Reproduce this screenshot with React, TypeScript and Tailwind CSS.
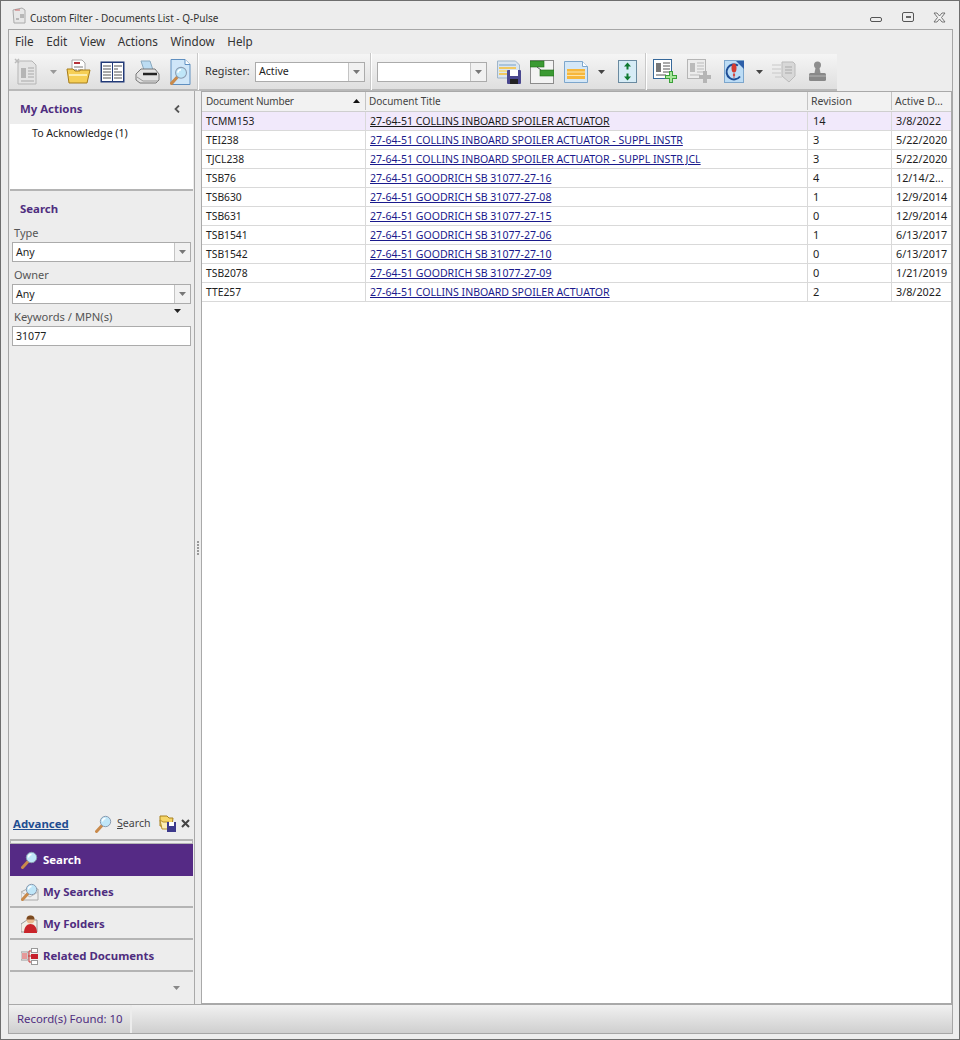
import React from "react";

const Caret = ({ c = "#444" }: { c?: string }) => (
  <svg width="7" height="4" viewBox="0 0 7 4" className="shrink-0"><path d="M0 0h7L3.5 4z" fill={c} /></svg>
);

const I = ({ children, w = 24, h = 24, className = "" }: { children: React.ReactNode; w?: number; h?: number; className?: string }) => (
  <svg width={w} height={h} viewBox={`0 0 ${w} ${h}`} className={`shrink-0 ${className}`}>{children}</svg>
);

const Magnifier = ({ x = 0, y = 0, s = 1 }: { x?: number; y?: number; s?: number }) => (
  <g transform={`translate(${x} ${y}) scale(${s})`}>
    <path d="M1.5 16.5 7 10.5" stroke="#c98a4b" strokeWidth="3" strokeLinecap="round" />
    <circle cx="10.5" cy="6.5" r="5.2" fill="#bfe6f8" stroke="#8a9bb0" strokeWidth="1" />
    <path d="M7.5 6.5a3 3 0 0 1 3-3" stroke="#fff" strokeWidth="1.4" fill="none" />
  </g>
);

const NewDocIcon = () => (
  <I w={26} h={27}>
    <path d="M4 3h14l4 4v19H4z" fill="#e4e4e4" stroke="#b5b5b5" />
    <path d="M1 1l4 4M5 1 1 5" stroke="#bbb" strokeWidth="1.5" />
    <rect x="7" y="10" width="5" height="10" fill="#b5b5b5" />
    <path d="M14 10h6M14 13h6M14 16h6M14 19h6M7 23h13" stroke="#a8a8a8" />
  </I>
);
const OpenIcon = () => (
  <I w={25} h={25}>
    <path d="M6 1h10l3 3v12H6z" fill="#fff" stroke="#aaa" />
    <path d="M8 4h6" stroke="#b5333a" strokeWidth="2" />
    <path d="M8 8h9M8 11h3M12 11h5" stroke="#777" />
    <path d="M1 10h6l2 2h5v-1h10l-3 13H3z" fill="#f6cf55" stroke="#a57c1c" />
    <path d="M3 16h18" stroke="#fdeeaf" strokeWidth="2" />
  </I>
);
const BookIcon = () => (
  <I w={25} h={22}>
    <rect x="0.5" y="0.5" width="24" height="21" fill="#223a78" />
    <rect x="2" y="2" width="10" height="18" fill="#fff" />
    <rect x="13" y="2" width="10" height="18" fill="#fff" />
    <path d="M3 5h8M3 8h8M3 11h8M3 14h8M3 17h8" stroke="#555" />
    <path d="M14 5h8M14 8h4M14 11h8M14 14h8M14 17h8" stroke="#555" />
  </I>
);
const PrinterIcon = () => (
  <I w={25} h={24}>
    <path d="M6 1h9l3 9H9z" fill="#bcdcf2" stroke="#8aa9bf" />
    <path d="M1 14l5-5h14l4 5v6l-3 3H5l-4-3z" fill="#e2e2e2" stroke="#777" />
    <path d="M8 14h14" stroke="#222" strokeWidth="2.5" />
    <path d="M2 17l6 4h15" stroke="#999" fill="none" />
  </I>
);
const PreviewIcon = () => (
  <I w={21} h={26}>
    <path d="M1 .5h14l5 5v20H1z" fill="#cfe6f8" stroke="#5f8fc0" />
    <path d="M15 .5v5h5" fill="#fff" stroke="#5f8fc0" />
    <Magnifier x={0} y={7} s={1.05} />
  </I>
);
const SaveGridIcon = () => (
  <I w={24} h={24}>
    <path d="M.5 1h18l4 4v13H.5z" fill="#dbe6f0" stroke="#9fb5c9" />
    <path d="M2 4h17v2H2z" fill="#a9c4dc" />
    <path d="M2 7h17v2H2z" fill="#f0c860" />
    <path d="M2 10h8v2H2z" fill="#f0dc90" />
    <path d="M2 13h8v2H2z" fill="#f0c860" />
    <rect x="10" y="10" width="14" height="14" rx="1" fill="#4a478f" />
    <rect x="13" y="10" width="8" height="6" fill="#fff" />
    <rect x="13" y="19" width="8" height="5" fill="#222" />
  </I>
);
const GanttIcon = () => (
  <I w={24} h={24}>
    <rect x=".5" y=".5" width="23" height="23" fill="#f3f3f3" stroke="#8c8c8c" />
    <rect x="0" y="1" width="14" height="6" fill="#3b9a33" stroke="#1f6b1a" strokeWidth=".6" />
    <rect x="10" y="10" width="14" height="6" fill="#3b9a33" stroke="#1f6b1a" strokeWidth=".6" />
    <path d="M7 7l4 3" stroke="#555" />
  </I>
);
const ListDocIcon = () => (
  <I w={24} h={22}>
    <path d="M.5.5h18l5 5v16H.5z" fill="#d4e7f7" stroke="#7da6cc" />
    <path d="M18.500.5v5h5" fill="#fff" stroke="#7da6cc" />
    <rect x="3" y="8" width="18" height="10" fill="#f6b73c" />
    <path d="M3 11h18M3 14.500h18" stroke="#fde5ac" />
  </I>
);
const ExpandIcon = () => (
  <I w={19} h={23}>
    <rect x=".5" y=".5" width="18" height="22" fill="#d7ecf6" stroke="#6a8aa0" />
    <path d="M9.500 2.500l-3.500 4h2.500v3h2v-3h2.500z M9.500 20.500l-3.500-4h2.500v-3h2v3h2.500z" fill="#0f7a30" />
  </I>
);
const AddDocIcon = () => (
  <I w={25} h={25}>
    <rect x=".5" y=".5" width="18" height="19" fill="#fff" stroke="#36689a" />
    <rect x="3" y="4" width="5" height="9" fill="#777" />
    <path d="M10 4h7M10 7h7M10 10h7M10 13h7M3 16h10" stroke="#555" />
    <path d="M18 12v12M12 18h12" stroke="#3aa13a" strokeWidth="4" />
    <path d="M18 13v10M13 18h10" stroke="#a7e59a" strokeWidth="2" />
  </I>
);
const AddDocDisabledIcon = () => (
  <I w={25} h={25}>
    <rect x=".5" y=".5" width="18" height="19" fill="#ececec" stroke="#b5b5b5" />
    <rect x="3" y="4" width="5" height="9" fill="#bbb" />
    <path d="M10 4h7M10 7h7M10 10h7M10 13h7M3 16h10" stroke="#bbb" />
    <path d="M18 12v12M12 18h12" stroke="#b5b5b5" strokeWidth="4" />
  </I>
);
const CycleIcon = () => (
  <I w={20} h={23}>
    <rect x=".5" y=".5" width="19" height="22" fill="#bcdcf5" stroke="#7da6cc" />
    <path d="M14 5.500a7.500 7.500 0 1 0 2 11" fill="none" stroke="#1e4d96" strokeWidth="2" />
    <path d="M12 1l8 0v8z" fill="#2d5fa8" />
    <ellipse cx="10" cy="8" rx="2.500" ry="4.500" fill="#d43b30" />
    <circle cx="10" cy="15" r="1.200" fill="#d43b30" />
    <path d="M10 13v5" stroke="#c55" />
  </I>
);
const StampListIcon = () => (
  <I w={24} h={22}>
    <path d="M0 4h9M0 8h9M0 12h9M3 16h7" stroke="#c8c8c8" />
    <path d="M10 1h11l2 2v12l-6 6-7-6z" fill="#d8d8d8" stroke="#bbb" />
    <path d="M13 6h7M13 9h7M13 12h7" stroke="#aaa" />
  </I>
);
const StampIcon = () => (
  <I w={19} h={21}>
    <circle cx="9.500" cy="4" r="3.500" fill="#8e8e8e" />
    <path d="M7.500 7h4l1 5h-6z" fill="#8e8e8e" />
    <rect x="1" y="12" width="17" height="8" rx="1.500" fill="#888" />
    <path d="M1 15h17" stroke="#b5b5b5" />
  </I>
);
const SearchIcon16 = () => <I w={18} h={18}><Magnifier x={0} y={0} /></I>;
const FolderSaveIcon = () => (
  <I w={17} h={17}>
    <path d="M1 1h7l2 2h4l-1 8H1z" fill="#f6d668" stroke="#a8801d" />
    <path d="M1 5l3 2h6v7H3z" fill="#fcefb7" stroke="#b8922f" />
    <rect x="8" y="7" width="9" height="10" fill="#3d3a8c" />
    <rect x="10" y="7" width="5" height="4" fill="#fff" />
  </I>
);
const MySearchIcon = () => (
  <I w={18} h={18}>
    <path d="M0 17V9l6-3h11v11z" fill="#eee" stroke="#aaa" />
    <path d="M0 9l9 5 8-5" fill="none" stroke="#bbb" />
    <Magnifier x={0} y={0} />
  </I>
);
const FolderPersonIcon = () => (
  <I w={18} h={18}>
    <path d="M0 17V9l6-4h10v12z" fill="#f2efe6" stroke="#999" />
    <ellipse cx="9.500" cy="4.500" rx="4" ry="4" fill="#e9b98f" />
    <path d="M5.500 4.500a4 4 0 0 1 8 0z" fill="#7a4a21" />
    <path d="M3 18c0-6 3-9 6.500-9s6.500 3 6.500 9z" fill="#c9242a" />
  </I>
);
const RelatedIcon = () => (
  <I w={17} h={17}>
    <rect x="0" y="4" width="7" height="8" fill="#fff" stroke="#999" />
    <path d="M1 6h5M1 8h5M1 10h5" stroke="#c33" />
    <rect x="10.500" y=".5" width="6" height="4" fill="#fff" stroke="#999" />
    <rect x="10" y="6" width="7" height="5" fill="#c7202c" />
    <rect x="10.500" y="12.500" width="6" height="4" fill="#fff" stroke="#999" />
    <path d="M7 8h3M8 3h2M8 14h2M8 3v11" stroke="#c33" />
  </I>
);

const Combo = ({ value, className = "" }: { value: string; className?: string }) => (
  <div className={`flex h-[20px] border border-[#ababab] bg-white ${className}`}>
    <div className="flex flex-1 items-center pl-[3px] text-[10.6px]">{value}</div>
    <div className="flex w-[16px] items-center justify-center border-l border-[#c4c4c4] bg-[#f1f1f1]"><Caret c="#777" /></div>
  </div>
);

const TbSep = () => <div className="mx-[2px] box-content h-[37px] w-px border-r border-white bg-[#c9c9c9]" />;

const rows = [
  ["TCMM153", "27-64-51 COLLINS INBOARD SPOILER ACTUATOR", "14", "3/8/2022"],
  ["TEI238", "27-64-51 COLLINS INBOARD SPOILER ACTUATOR - SUPPL INSTR", "3", "5/22/2020"],
  ["TJCL238", "27-64-51 COLLINS INBOARD SPOILER ACTUATOR - SUPPL INSTR JCL", "3", "5/22/2020"],
  ["TSB76", "27-64-51 GOODRICH SB 31077-27-16", "4", "12/14/2..."],
  ["TSB630", "27-64-51 GOODRICH SB 31077-27-08", "1", "12/9/2014"],
  ["TSB631", "27-64-51 GOODRICH SB 31077-27-15", "0", "12/9/2014"],
  ["TSB1541", "27-64-51 GOODRICH SB 31077-27-06", "1", "6/13/2017"],
  ["TSB1542", "27-64-51 GOODRICH SB 31077-27-10", "0", "6/13/2017"],
  ["TSB2078", "27-64-51 GOODRICH SB 31077-27-09", "0", "1/21/2019"],
  ["TTE257", "27-64-51 COLLINS INBOARD SPOILER ACTUATOR", "2", "3/8/2022"],
];

const navItems: [string, React.ReactNode][] = [
  ["My Searches", <MySearchIcon />],
  ["My Folders", <FolderPersonIcon />],
  ["Related Documents", <RelatedIcon />],
];

export default function App() {
  return (
    <div className="flex h-[1040px] w-[960px] flex-col overflow-hidden border border-[#6e6e6e] bg-[#ededed] pb-[5px] pl-[7px] pr-[6px] font-['Noto_Sans',sans-serif] text-[11px] leading-none text-[#1e1e1e]">
      <div className="flex h-[28px] shrink-0 items-center justify-between pt-[5px]">
        <div className="flex items-center gap-[3px] text-[10px] text-[#333]">
          <svg width="15" height="17" viewBox="0 0 15 17" className="ml-[4px] mt-[-4px]">
            <path d="M1 3l9-2 3 2v13H2z" fill="#e7e7e7" stroke="#aaa" />
            <path d="M3 3h5" stroke="#c66" />
            <path d="M8 8h4M8 10h4M4 12h3" stroke="#888" />
          </svg>
          <span>Custom Filter - Documents List - Q-Pulse</span>
        </div>
        <div className="mr-[7px] mt-[-1px] flex items-center">
          <div className="mt-[4px] h-[5px] w-[12px] rounded-[2px] border border-[#555]" />
          <div className="ml-[20px] flex h-[10px] w-[12px] items-center justify-center rounded-[2px] border border-[#555]"><div className="h-[2px] w-[5px] bg-[#666]" /></div>
          <svg width="13" height="11" viewBox="0 0 13 11" className="ml-[19px]"><path d="M1 1h3l2.500 3L9 1h3L8.500 5.500 12 10H9L6.500 7 4 10H1l3.500-4.500z" fill="#f2f2f2" stroke="#666" strokeWidth=".9" /></svg>
        </div>
      </div>

      <div className="flex min-h-0 flex-1 flex-col border border-[#a6a6a6] bg-[#ededed]">
        <div className="flex h-[24px] shrink-0 items-center gap-[12.5px] pl-[6px] text-[11.7px] text-[#333]">
          <span>File</span><span>Edit</span><span>View</span><span>Actions</span><span>Window</span><span>Help</span>
        </div>

        <div className="flex h-[37px] w-[828px] shrink-0 items-center border-b-2 border-[#b9b9b9] bg-gradient-to-b from-[#f5f5f5] to-[#dfdfdf] pl-[5px]">
          <NewDocIcon />
          <div className="ml-[10px]"><Caret c="#999" /></div>
          <div className="ml-[9px]"><OpenIcon /></div>
          <div className="ml-[9px]"><BookIcon /></div>
          <div className="ml-[10px]"><PrinterIcon /></div>
          <div className="ml-[10px]"><PreviewIcon /></div>
          <div className="ml-[4px]"><TbSep /></div>
          <span className="ml-[4px] w-[45px] whitespace-nowrap text-[10.8px] text-[#333]">Register:</span>
          <Combo value="Active" className="ml-[5px] w-[110px]" />
          <div className="ml-[3px]"><TbSep /></div>
          <Combo value="" className="ml-[3px] w-[110px]" />
          <div className="ml-[10px]"><SaveGridIcon /></div>
          <div className="ml-[9px]"><GanttIcon /></div>
          <div className="ml-[10px]"><ListDocIcon /></div>
          <div className="ml-[10px]"><Caret /></div>
          <div className="ml-[13px]"><ExpandIcon /></div>
          <div className="ml-[6px]"><TbSep /></div>
          <div className="ml-[4px]"><AddDocIcon /></div>
          <div className="ml-[9px]"><AddDocDisabledIcon /></div>
          <div className="ml-[12px]"><CycleIcon /></div>
          <div className="ml-[12px]"><Caret /></div>
          <div className="ml-[9px]"><StampListIcon /></div>
          <div className="ml-[12px]"><StampIcon /></div>
        </div>

        <div className="flex min-h-0 flex-1">
          <aside className="flex w-[186px] shrink-0 flex-col border-r border-[#a9a9a9]">
            <div className="flex h-[33px] shrink-0 items-center justify-between pl-[11px] pr-[14px] pt-[3px] text-[#4f2d7f]">
              <b className="text-[11.4px]">My Actions</b>
              <svg width="6" height="8" viewBox="0 0 6 8"><path d="M5 0.500 1.500 4 5 7.500" fill="none" stroke="#555" strokeWidth="1.800" /></svg>
            </div>
            <div className="ml-[1px] h-[67px] w-[183px] shrink-0 border-b-2 border-[#b4b4b4] bg-white pl-[22px] pt-[4px] text-[10.6px] text-[#222]">To Acknowledge (1)</div>
            <div className="flex flex-col px-[3px]">
              <b className="ml-[8px] mt-[12px] h-[11px] text-[11.4px] text-[#4f2d7f]">Search</b>
              <label className="mb-[4px] mt-[13px] h-[11px] pl-[2px] text-[#555]">Type</label>
              <Combo value="Any" />
              <label className="mb-[4px] mt-[7px] h-[11px] pl-[2px] text-[#555]">Owner</label>
              <Combo value="Any" />
              <div className="mb-[4px] mt-[7px] flex h-[11px] items-start justify-between pl-[2px] text-[#555]">
                <span className="text-[11.2px]">Keywords / MPN(s)</span>
                <span className="mr-[10px] mt-[-2px]"><Caret c="#222" /></span>
              </div>
              <div className="flex h-[20px] items-center border border-[#ababab] bg-white pl-[3px] text-[10.6px]">31077</div>
            </div>

            <div className="mt-auto flex h-[29px] shrink-0 items-center pb-[2px] pl-[4px]">
              <a className="w-[56px] whitespace-nowrap text-[11.4px] font-bold text-[#1f4e91] underline">Advanced</a>
              <div className="ml-[26px]"><SearchIcon16 /></div>
              <span className="ml-[4px] w-[33px] whitespace-nowrap text-[10.6px] text-[#444]"><span className="underline">S</span>earch</span>
              <div className="ml-[9px]"><FolderSaveIcon /></div>
              <svg width="9" height="9" viewBox="0 0 9 9" className="ml-[5px]"><path d="M1 1l7 7M8 1 1 8" stroke="#444" strokeWidth="2" /></svg>
            </div>

            <div className="ml-[1px] h-[5px] w-[183px] shrink-0 border border-t-2 border-[#b4b4b4]" />
            <div className="ml-[1px] flex h-[32px] w-[183px] shrink-0 items-center bg-[#552a85] pl-[11px] text-[11.4px] font-bold text-white">
              <div className="w-[22px]"><SearchIcon16 /></div><span>Search</span>
            </div>
            {navItems.map(([label, icon]) => (
              <div key={label} className="ml-[1px] flex h-[32px] w-[183px] shrink-0 items-center border-b-2 border-[#b4b4b4] pl-[11px] pt-[2px] text-[11.4px] font-bold text-[#4f2d7f]">
                <div className="w-[22px]">{icon}</div><span>{label}</span>
              </div>
            ))}
            <div className="flex h-[32px] shrink-0 items-center justify-end pr-[14px]"><Caret c="#888" /></div>
          </aside>

          <div className="flex w-[6px] shrink-0 items-center justify-center">
            <div className="flex flex-col gap-[1px]">
              {Array.from({ length: 5 }).map((_, i) => <div key={i} className="h-[2px] w-[2px] bg-[#999]" />)}
            </div>
          </div>

          <main className="min-w-0 flex-1 border border-[#a9a9a9] bg-white">
            <div className="grid h-[20px] grid-cols-[164px_442px_84px_59px] border-b border-[#cfcfcf] bg-[#f2f2f2] pb-px text-[10px] text-[#444]">
              <div className="flex items-center justify-between border-r border-[#c4c4c4] pl-[4px] pr-[5px]"><span className="tracking-[-0.2px]">Document Number</span><svg width="7" height="4" viewBox="0 0 7 4"><path d="M0 4h7L3.500 0z" fill="#111" /></svg></div>
              <div className="flex items-center border-r border-[#c4c4c4] pl-[3px]">Document Title</div>
              <div className="flex items-center border-r border-[#c4c4c4] pl-[3px] text-[10.5px]">Revision</div>
              <div className="flex items-center whitespace-nowrap pl-[3px] text-[10.5px]">Active D...</div>
            </div>
            {rows.map((r, i) => (
              <div key={r[0]} className={`grid h-[19px] grid-cols-[164px_442px_84px_59px] border-b border-[#d9d9d9] ${i === 0 ? "bg-[#f1e9fb]" : "bg-white"}`}>
                <div className="flex items-center border-r border-[#d9d9d9] pl-[4px] text-[10.3px]">{r[0]}</div>
                <div className="flex items-center border-r border-[#d9d9d9] pl-[4px] text-[10.55px]">
                  <span className={`underline ${i === 0 ? "text-[#1a1a1a]" : "text-[#1a1a8c]"}`}>{r[1]}</span>
                </div>
                <div className="flex items-center border-r border-[#d9d9d9] pb-px pl-[5px]">{r[2]}</div>
                <div className="flex items-center whitespace-nowrap pl-[4px] text-[10.8px]">{r[3]}</div>
              </div>
            ))}
          </main>
        </div>

        <div className="flex h-[29px] shrink-0 items-center border-t border-[#a9a9a9] bg-gradient-to-b from-[#f1f1f1] to-[#cfcfcf] text-[#4f2d7f]">
          <div className="flex h-full w-[123px] items-center whitespace-nowrap border-r-2 border-[#ececec] pl-[8px] text-[11.4px]">Record(s) Found: 10</div>
        </div>
      </div>
    </div>
  );
}
